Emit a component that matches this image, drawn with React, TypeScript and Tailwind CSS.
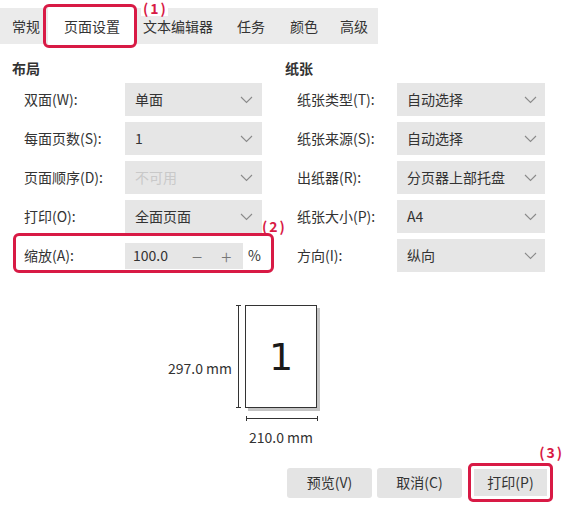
const red = "border-[#d81a45]";

function Chevron() {
  return (
    <svg width="13" height="8" viewBox="0 0 13 8" fill="none">
      <polyline points="1,1 6.5,6.5 12,1" stroke="#8a8a8a" strokeWidth="1.1" />
    </svg>
  );
}

function Select({ value, width, disabled, pad }: { value: string; width: string; disabled?: boolean; pad: string }) {
  return (
    <div className={`flex h-[33px] items-center justify-between bg-[#e6e6e6] pl-[10px] ${width} ${pad}`}>
      <span className={disabled ? "text-[#c9c9c9]" : "text-[#333]"}>{value}</span>
      <Chevron />
    </div>
  );
}

function Row({ label, children, labelWidth }: { label: string; children: React.ReactNode; labelWidth: string }) {
  return (
    <div className="flex h-[33px] items-center">
      <div className={`pl-[12px] ${labelWidth}`}>{label}</div>
      {children}
    </div>
  );
}

function Note({ text, className }: { text: string; className: string }) {
  return (
    <span className={`absolute text-[14px] font-bold leading-none tracking-[2px] text-[#d81a45] ${className}`}>{text}</span>
  );
}

export default function App() {
  const tabs = ["文本编辑器", "任务", "颜色", "高级"];
  const tabGaps = ["ml-[7px]", "ml-[24px]", "ml-[25px]", "ml-[22px]"];

  return (
    <div className="relative h-[509px] w-[565px] overflow-hidden bg-white text-[14px] text-[#333] font-['Noto_Sans_CJK_SC','Noto_Sans',sans-serif]">
      {/* tabs */}
      <div className="pt-[8px]">
        <div className="flex h-[36px] w-[378px] items-center bg-[#ebebeb]">
          <span className="pl-[12px]">常规</span>
          <div className="relative ml-[8px] flex h-full w-[88px] items-center justify-center bg-white">
            页面设置
            <div className={`absolute -left-[5px] -right-[1px] -top-[4px] -bottom-[4px] rounded-[6px] border-[3px] ${red}`} />
          </div>
          {tabs.map((t, i) => (
            <span key={t} className={tabGaps[i]}>
              {t}
            </span>
          ))}
        </div>
      </div>
      <Note text="(1)" className="left-[141px] top-[1px] bg-white pl-[2px] pb-[1px]" />

      {/* settings */}
      <div className="mt-[14px] flex">
        <div className="w-[273px] pl-[12px]">
          <div className="h-[20px] font-bold leading-[20px]">布局</div>
          <div className="mt-[5px] flex flex-col gap-[6px]">
            <Row label="双面(W):" labelWidth="w-[113px]">
              <Select value="单面" width="w-[137px]" pad="pr-[9px]" />
            </Row>
            <Row label="每面页数(S):" labelWidth="w-[113px]">
              <Select value="1" width="w-[137px]" pad="pr-[9px]" />
            </Row>
            <Row label="页面顺序(D):" labelWidth="w-[113px]">
              <Select value="不可用" width="w-[137px]" pad="pr-[9px]" disabled />
            </Row>
            <Row label="打印(O):" labelWidth="w-[113px]">
              <Select value="全面页面" width="w-[137px]" pad="pr-[9px]" />
            </Row>
            <div className="relative">
              <Row label="缩放(A):" labelWidth="w-[113px]">
                <div className="flex h-[26px] w-[118px] items-center bg-[#e6e6e6] pl-[8px]">
                  <span>100.0</span>
                  <span className="ml-[24px] text-[19px] font-light leading-none text-[#777]">−</span>
                  <span className="ml-[19px] text-[19px] font-light leading-none text-[#777]">+</span>
                </div>
                <span className="ml-[5px]">%</span>
              </Row>
              <div className={`absolute -top-[6px] -bottom-[1px] left-[1px] w-[261px] rounded-[6px] border-[3px] ${red}`} />
              <Note text="(2)" className="left-[250px] -top-[20px]" />
            </div>
          </div>
        </div>

        <div className="pl-[12px]">
          <div className="h-[20px] font-bold leading-[20px]">纸张</div>
          <div className="mt-[5px] flex flex-col gap-[6px]">
            <Row label="纸张类型(T):" labelWidth="w-[112px]">
              <Select value="自动选择" width="w-[148px]" pad="pr-[8px]" />
            </Row>
            <Row label="纸张来源(S):" labelWidth="w-[112px]">
              <Select value="自动选择" width="w-[148px]" pad="pr-[8px]" />
            </Row>
            <Row label="出纸器(R):" labelWidth="w-[112px]">
              <Select value="分页器上部托盘" width="w-[148px]" pad="pr-[8px]" />
            </Row>
            <Row label="纸张大小(P):" labelWidth="w-[112px]">
              <Select value="A4" width="w-[148px]" pad="pr-[8px]" />
            </Row>
            <Row label="方向(I):" labelWidth="w-[112px]">
              <Select value="纵向" width="w-[148px]" pad="pr-[8px]" />
            </Row>
          </div>
        </div>
      </div>

      {/* preview */}
      <div className="mt-[33px] flex pl-[168px]">
        <div className="w-[65px] pt-[53px] leading-[20px]">297.0 mm</div>
        <div className="ml-[3px] flex h-[103px] w-[5px] justify-center border-y border-[#333]">
          <div className="h-full w-px bg-[#333]" />
        </div>
        <div className="ml-[4px] flex h-[103px] w-[72px] items-center justify-center border border-[#333] bg-white shadow-[3px_3px_0_#c4c4c4] text-[38px] leading-none text-[#1a1a1a] font-['DejaVu_Sans',sans-serif]">
          1
        </div>
      </div>
      <div className="ml-[246px] mt-[8px] flex h-[5px] w-[72px] items-center border-x border-[#333]">
        <div className="h-px w-full bg-[#333]" />
      </div>
      <div className="ml-[249px] mt-[6px] leading-[20px]">210.0 mm</div>

      {/* buttons */}
      <div className="mt-[16px] flex items-center justify-end gap-[5px] pr-[12px]">
        <button className="flex h-[30px] w-[85px] items-center justify-center rounded-[3px] bg-[#e4e4e4]">预览(V)</button>
        <button className="flex h-[30px] w-[85px] items-center justify-center rounded-[3px] bg-[#e4e4e4]">取消(C)</button>
        <div className={`relative ml-[1px] rounded-[5px] border-[3px] p-[3px] ${red}`}>
          <button className="flex h-[27px] w-[73px] items-center justify-center bg-[#e4e4e4]">打印(P)</button>
          <Note text="(3)" className="-right-[14px] -top-[21px]" />
        </div>
      </div>
    </div>
  );
}
